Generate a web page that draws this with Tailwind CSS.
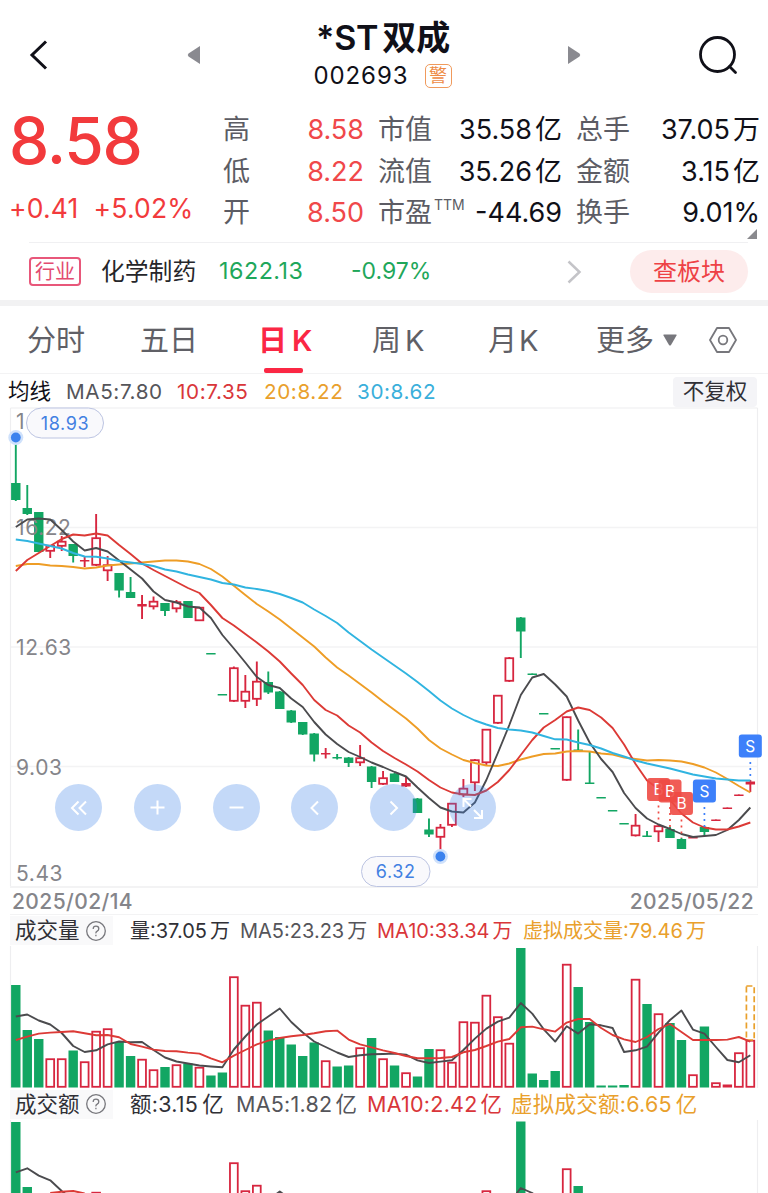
<!DOCTYPE html>
<html lang="zh-CN">
<head>
    <meta charset="UTF-8">
    <meta name="viewport" content="width=device-width, initial-scale=1.0">
    <title>*ST双成 002693</title>
    <script src="https://cdn.jsdelivr.net/npm/@tailwindcss/browser@4"></script>
</head>
<body class="bg-white">
<div class="w-[768px] h-[1193px] overflow-hidden bg-white text-[#101018] font-['Inter','Noto_Sans_CJK_SC',sans-serif] whitespace-nowrap">

    <!-- Header -->
    <header class="h-[108px] flex items-start justify-between pl-[28px] pr-[29px]">
        <svg class="w-5 h-[30px] mt-10" viewBox="0 0 20 30" fill="none" stroke="#101018" stroke-width="3"><path d="M18 1.5L4 15L18 28.5"/></svg>
        <svg class="w-[14px] h-5 mt-[45px] ml-[31px]" viewBox="0 0 14 20" fill="#8a8a90"><path d="M13 1v18L1.5 11.5Q0 10 1.5 8.5Z"/></svg>
        <div class="flex flex-col items-center pt-[17px] w-[150px]">
            <h1 class="text-[34px] leading-[42px] font-semibold tracking-[-0.2px] -ml-[2px]">*ST<span class="ml-1">双成</span></h1>
            <div class="flex items-center justify-between w-[138px] h-[34px] -ml-[3px]">
                <span class="text-[24px] tracking-[0.9px]">002693</span>
                <span class="flex items-center justify-center w-[27px] h-6 rounded-[5px] border-[1.5px] border-[#f09a5c] text-[#ee8b45] text-[18px] leading-none">警</span>
            </div>
        </div>
        <svg class="w-[14px] h-5 mt-[45px] mr-[10px]" viewBox="0 0 14 20" fill="#8a8a90"><path d="M1 1v18L12.5 11.5Q14 10 12.5 8.5Z"/></svg>
        <svg class="w-10 h-10 mt-9" viewBox="0 0 40 40" fill="none" stroke="#101018" stroke-width="2.8" stroke-linecap="round"><circle cx="18.5" cy="18.5" r="17"/><path d="M30.5 30.5L36.5 36.5"/></svg>
    </header>

    <!-- Quote -->
    <section class="h-[134px] flex relative">
        <div class="w-[223px] pl-[9px] text-[#f23a3c]">
            <div class="text-[64px] leading-[64px] pt-px font-medium tracking-[-1.2px]">8.58</div>
            <div class="flex gap-[15px] mt-5 text-[26.5px] leading-[30px] tracking-[0.2px]"><span>+0.41</span><span>+5.02%</span></div>
        </div>
        <dl class="grid grid-cols-[60px_81px_88px_110px_88px_110px] [&_dt]:text-[#5c5c64] [&_dd]:text-right text-[27px] leading-[41.5px] pt-px h-[126px] w-[537px]">
            <dt>高</dt><dd class="text-[#f0484a]">8.58</dd><dt class="pl-[14px]">市值</dt><dd>35.58<span class="ml-[3px]">亿</span></dd><dt class="pl-[14px]">总手</dt><dd>37.05<span class="ml-[3px]">万</span></dd>
            <dt>低</dt><dd class="text-[#f0484a]">8.22</dd><dt class="pl-[14px]">流值</dt><dd>35.26<span class="ml-[3px]">亿</span></dd><dt class="pl-[14px]">金额</dt><dd>3.15<span class="ml-[3px]">亿</span></dd>
            <dt>开</dt><dd class="text-[#f0484a]">8.50</dd><dt class="pl-[14px] flex items-start">市盈<span class="text-[14px] leading-[25px] ml-[2px]">TTM</span></dt><dd>-44.69</dd><dt class="pl-[14px]">换手</dt><dd>9.01%</dd>
        </dl>
        <svg class="absolute right-[11px] bottom-[3px] w-[10px] h-[10px]" viewBox="0 0 10 10" fill="#8a8a8e"><path d="M10 0v10H0Z"/></svg>
    </section>

    <!-- Industry -->
    <section class="h-[58px] border-t border-[#f0f0f2] ml-[29px] mr-5 flex items-center">
        <span class="w-[52px] h-[29px] border-2 border-[#e8577a] text-[#e34b70] rounded-[4px] flex items-center justify-center text-[20px]">行业</span>
        <span class="ml-5 w-[118px] text-[23.8px] text-[#26262a]">化学制药</span>
        <span class="w-[132px] text-[23.3px] tracking-[0.5px] text-[#1fa75b]">1622.13</span>
        <span class="w-[216px] text-[23px] text-[#1fa75b]">-0.97%</span>
        <svg class="w-[15px] h-6" viewBox="0 0 15 24" fill="none" stroke="#c4c4c8" stroke-width="2.5"><path d="M1.5 1.5L12.5 12L1.5 22.5"/></svg>
        <button class="ml-[48px] w-[118px] h-[43px] rounded-full bg-[#fdecec] text-[#ee4245] text-[24px]">查板块</button>
    </section>
    <div class="h-[6px] bg-[#f2f2f3]"></div>

    <!-- Period tabs -->
    <nav class="h-[68px] border-b border-[#f3f3f4] flex items-center text-[29px] text-[#606066] [&>span]:pt-[3px]">
        <span class="w-[113px] ml-[27px]">分时</span>
        <span class="w-[118px]">五日</span>
        <span class="w-[114px] h-full flex items-center relative font-semibold text-[#fb2744]">日<span class="ml-[5px]">K</span><i class="absolute left-[6px] bottom-0 w-[39px] h-[5px] rounded-[2px] bg-[#fb2744]"></i></span>
        <span class="w-[116px]">周<span class="ml-[4px]">K</span></span>
        <span class="w-[108px]">月<span class="ml-[2px]">K</span></span>
        <span>更多</span>
        <svg class="w-[14px] h-3 ml-[9px]" viewBox="0 0 14 12" fill="#77777c"><path d="M1 .5h12q1 0 .5 1L8 11q-1 1-2 0L.5 1.5Q0 .5 1 .5Z"/></svg>
        <svg class="w-7 h-[26px] ml-[32px]" viewBox="0 0 28 26" fill="none" stroke="#77777c" stroke-width="1.8" stroke-linejoin="round"><path d="M8 1h12L27 13L20 25H8L1 13Z"/><circle cx="14" cy="13" r="4.3"/></svg>
    </nav>

    <!-- Moving averages -->
    <div class="h-[34px] pl-[8px] pr-[11px] pt-px flex items-center text-[20.7px] tracking-[0.6px]">
        <span class="w-[58px] text-[21.5px] tracking-normal">均线</span>
        <span class="w-[111px] text-[#55555a]">MA5:7.80</span>
        <span class="w-[87px] text-[#d9363a]">10:7.35</span>
        <span class="w-[93px] text-[#e9a02c]">20:8.22</span>
        <span class="flex-1 text-[#3aafdb]">30:8.62</span>
        <span class="w-[84px] h-[30px] rounded-[4px] bg-[#f4f4f7] flex items-center justify-center text-[21.5px] tracking-normal text-[#303036]">不复权</span>
    </div>

    <!-- K line chart -->
    <div class="relative h-[478px]">
        <svg id="kline" class="block w-[768px] h-[478px] overflow-visible" viewBox="0 408 768 478"></svg>
        <div class="absolute left-[55px] top-[376px] flex gap-[31.8px] [&>span]:w-[47px] [&>span]:h-[47px] [&>span]:rounded-full [&>span]:bg-[#3b82e8]/30 [&_svg]:w-[47px] [&_svg]:h-[47px] [&_svg]:fill-none [&_svg]:stroke-white [&_svg]:stroke-[2px]">
            <span><svg viewBox="0 0 47 47"><path d="M23.5 17.5l-6.500 6.500l6.500 6.500M31 17.5l-6.500 6.500l6.500 6.500"/></svg></span>
            <span><svg viewBox="0 0 47 47"><path d="M16.5 23.5h14M23.5 16.5v14"/></svg></span>
            <span><svg viewBox="0 0 47 47"><path d="M16.5 23.5h14"/></svg></span>
            <span><svg viewBox="0 0 47 47"><path d="M27 17.5l-6.500 6.500l6.500 6.500"/></svg></span>
            <span><svg viewBox="0 0 47 47"><path d="M20.5 17.5l6.500 6.500l-6.500 6.500"/></svg></span>
            <span><svg viewBox="0 0 47 47"><path d="M22 22.5l-7.500-7.500M14.5 23v-8h8M25 26l7.500 7.500M25 34h8v-8"/></svg></span>
        </div>
    </div>

    <!-- Dates -->
    <div class="h-[29px] mx-[10px] pt-[2px] border-t-2 border-b border-[#f3f3f4] flex items-center justify-between pl-[2px] pr-[4px] text-[21px] text-[#85858a] font-medium tracking-[0.4px]">
        <span>2025/02/14</span><span>2025/05/22</span>
    </div>

    <!-- Volume -->
    <div class="h-[31px] pl-[10px] flex items-center text-[20px]">
        <div class="w-[103px] h-[29px] pl-[5px] mr-[17px] bg-[#f9f9fa] flex items-center gap-[6px] text-[21.5px] text-[#303036]">成交量
            <svg class="w-5 h-5" viewBox="0 0 20 20" fill="none" stroke="#77777c" stroke-width="1.3"><circle cx="10" cy="10" r="9.3"/><path d="M7.2 8q0-2.800 2.800-2.800t2.800 2.600q0 1.500-1.600 2.300T9.900 12.300M9.900 13.800v1.400"/></svg>
        </div>
        <span class="w-[110px] text-[#303036]">量:37.05<span class="ml-[3px]">万</span></span>
        <span class="w-[137px] text-[#55555a]">MA5:23.23<span class="ml-[3px]">万</span></span>
        <span class="w-[146px] text-[#d9363a]">MA10:33.34<span class="ml-[3px]">万</span></span>
        <span class="text-[#e9a02c]">虚拟成交量:79.46<span class="ml-[3px]">万</span></span>
    </div>
    <svg id="volume" class="block w-[768px] h-[142px]" viewBox="0 946 768 142"></svg>

    <!-- Turnover -->
    <div class="h-[32px] pl-[10px] flex items-center text-[21.5px] tracking-[0.25px]">
        <div class="w-[103px] h-[29px] pl-[5px] mr-[17px] bg-[#f9f9fa] flex items-center gap-[6px] text-[21.5px] tracking-normal text-[#303036]">成交额
            <svg class="w-5 h-5" viewBox="0 0 20 20" fill="none" stroke="#77777c" stroke-width="1.3"><circle cx="10" cy="10" r="9.3"/><path d="M7.2 8q0-2.800 2.800-2.800t2.800 2.600q0 1.500-1.600 2.300T9.900 12.300M9.900 13.800v1.400"/></svg>
        </div>
        <span class="w-[106px] text-[#303036]">额:3.15<span class="ml-1">亿</span></span>
        <span class="w-[131px] text-[#55555a]">MA5:1.82<span class="ml-[3px]">亿</span></span>
        <span class="w-[144px] text-[#d9363a]">MA10:2.42<span class="ml-[3px]">亿</span></span>
        <span class="text-[#e9a02c]">虚拟成交额:6.65<span class="ml-1">亿</span></span>
    </div>
    <svg id="turnover" class="block w-[768px] h-[73px]" viewBox="0 1120 768 73"></svg>
</div>

<script>
    const RED = '#d7263f', GREEN = '#12a663';
    const xAt = i => 15.8 + i * 11.477;

    // color, high, body top, body bottom, low
    const candles = [
        ['g',437,483,500,501],['g',485,508,514,515],['g',512,512,552,552],['r',545,545,551.5,558],['r',536,541,546.5,551],
        ['g',544,544,556,562.5],['r',556,560,561.5,567],['r',514,537.5,565.5,566],['r',556,564.5,571,581],['g',573,573,590.5,597.5],
        ['g',577,592,598,598],['r',595,604,606.5,619],['r',596.5,601,607,609.5],['g',603,603,611,616],['r',600,601.5,609,612.5],
        ['g',601,601,618,618],['r',607,607,621,621],['g',653,653,654.5,654],['g',694,694,695.5,695],['r',666.5,667.5,701.5,702],
        ['r',675,691,701.5,708],['r',661.5,681,699.5,706],['g',671.5,682,692.5,694],['g',691,691.5,709,709],['g',710,710.5,722.5,723],
        ['g',722,722,734.5,735],['g',733,733.5,754.5,761.5],['r',748,753,754.5,758.5],['g',754,757,758.5,759.5],['g',757,757.5,763,767],
        ['r',745,757.5,763,766],['g',766,766.5,782,788],['r',771,777.5,784.5,785],['g',773,773.5,782,782],['r',777,783,786.5,787],
        ['g',798,798.5,813,813],['g',818.5,829.5,834.5,837],['r',824,827,837.5,852],['r',803,803,825.5,827],['r',779,788,795,797],
        ['r',759,759.5,783,791],['r',729,729,763,765],['r',695,695,723.5,724],['r',657,657.5,681.5,682],['g',617,617.5,631.5,658],
        ['g',673.5,673.5,675,675],['g',713,713,714.5,714],['g',748,748,749.5,749],['r',716.5,716.5,780.5,781],['g',729.5,749.5,751,751],
        ['g',752,782.5,784,784],['g',797,797,798.5,798],['g',810,810,811.5,811],['g',823,823,824.5,824],['r',814,825,836,836.5],
        ['g',831,835.5,837,837],['r',824,825.5,832,842],['g',827,829,838,838],['g',838,839,849,849],['r',837,837,838.5,838],
        ['g',826,827,832,836],['r',819.5,819.5,821,821],['r',807.5,807.5,809,809],['r',794.5,794.5,796,796],['r',780,781.5,784.5,792]
    ];

    const ma5 = [527,519.5,518.5,519.5,530,541.5,550.5,548,551.5,560.5,569.5,578.5,591.5,600,602.5,606.5,607.5,618,635,648.5,662.5,677,685,688,698.5,707,722,734.5,744,752,757,762.5,767,772,776.5,787.5,798,807.5,811.5,812.5,802.5,780,753,725,695,677.5,674,684.5,696.5,720.5,742.5,759,772,793,808,818.5,824.5,829,834,837,836,835,830,820,807.5];
    const ma10 = [571,560,553,546,539,534.5,535.5,533.5,535.5,545,554,563.5,570,576,582,588,593,605,618,625.5,634,642.5,651.5,661.5,673.5,685,700,710,715.5,725.5,732.5,742.5,751,758,764.5,771.5,780,787.5,792.5,794.5,795,790.5,782,770,755,740,727.5,720,711.5,707.5,710,717.5,728,744.5,764,780.5,789,800,813.5,822.5,827.5,829.5,829.5,826.5,822.5];
    const ma20 = [566,564,564,565.5,566,567,568.5,567.5,565.5,564.5,563.5,562.5,561.5,560.5,560.5,561.5,564,569,576.5,585.7,595,604,611.5,619.5,628.5,637.5,646.5,657.5,667.5,675.5,684,692.5,701.5,710,718.5,728.5,740,748.5,754.5,760,763,765.5,766,763.5,759.5,756.5,754,753.5,751.5,751,751.5,753.5,754.5,757.5,759,760.5,760,760.5,761.5,764,767.5,772.5,779,786,792.5];
    const ma30 = [539.5,541,543.5,546,548.5,553,556.5,556.7,558.5,561,562.5,564,566,569.5,571.5,574.5,577,579.5,583,584.5,587.5,589,591,594,598,602.5,609.5,616,623,632.5,641,649.5,657.5,665.5,673.5,682,691,700.5,708.5,715,720.5,724.5,728,729.5,730.5,732.5,736,739.3,739.5,742.5,745,748.5,753,756.5,760.5,763.5,766,768.5,771.5,774.5,776.5,778.5,779.5,780.5,780.5];

    // bar tops, colors follow `volColor`
    const volTop = [985,1030,1039,1058.5,1058.5,1050.5,1061.5,1031,1028.5,1042,1056,1059,1069.5,1067,1064.5,1063.5,1067,1075.5,1072.5,976.5,1005,1002,1030.5,1037,1044.5,1056,1042.5,1060.5,1066.5,1065.5,1047.5,1038,1058.5,1065.5,1072.5,1076.5,1049,1049.5,1062,1021.5,1022,995,1016.5,1043,948,1073.5,1080,1071,964,987,1022,1085.5,1085.5,1085,979,1004,1013.5,1023,1040,1074.5,1026.5,1082.5,1084.5,1052.5,1040];
    const volColor = 'gggrrgrrrggrrgrgrggrrrgggggrggrgrgrggrrrrrrrggggrgggggrgrggrgrrrr';
    const volMa5 = [1016.5,1014.5,1020.5,1024.5,1033,1046,1052,1050.3,1044.3,1041.5,1042.3,1042,1050,1057.5,1061.5,1063.5,1065.5,1066.5,1067.3,1049.5,1036.5,1024.5,1016.5,1008.5,1022,1032.5,1041.5,1047,1052.5,1057,1055.3,1054.3,1054,1053.6,1054.6,1060.3,1063,1061.6,1060.3,1050,1038.6,1028.6,1021.6,1017.6,1003,1013.6,1029.3,1041.6,1026.3,1033.6,1024.3,1025.3,1028,1052,1050.3,1046.6,1032.6,1020,1010.6,1029.6,1033.6,1047,1060,1062.3,1055.3];
    const volMa10 = [1040,1036.6,1033.6,1032.6,1032,1031.3,1033.3,1035.3,1035,1037.3,1044,1046.6,1049.6,1051,1051.3,1052.6,1053.6,1058.3,1062.3,1055.6,1050,1044.3,1040.6,1038,1036.3,1035,1033.3,1031.3,1030.6,1039.6,1044.3,1047.3,1050.3,1053,1056,1058.3,1058.3,1058,1057,1052.3,1050,1046,1041.6,1039,1027.3,1026.6,1029.3,1031.6,1022.6,1019,1019,1028,1035,1039.3,1042,1037,1029,1024,1032,1040,1040,1040,1039.6,1037,1041.6];

    const hline = (y, c = '#f3f3f4', w = 1.5) => `<path d="M10.5 ${y}H757.5" stroke="${c}" stroke-width="${w}"/>`;
    const frame = (t, b) => `<path d="M10.5 ${t}V${b}M757.5 ${t}V${b}" stroke="#eeeef0" stroke-width="1.2"/>`;
    const line = (a, c, from = 0) => `<polyline fill="none" stroke="${c}" stroke-width="1.9" stroke-linejoin="round" points="${a.map((y, i) => xAt(i + from) + ',' + y).join(' ')}"/>`;

    function box(i, color, top, bottom) {
        const x = xAt(i), h = bottom - top;
        if (color === 'g') return `<rect x="${x - 4.7}" y="${top}" width="9.4" height="${h}" fill="${GREEN}"/>`;
        if (h < 4.5) return `<rect x="${x - 4.7}" y="${top}" width="9.4" height="${h}" fill="${RED}"/>`;
        return `<rect x="${x - 3.9}" y="${top + .7}" width="7.8" height="${h - 1.4}" fill="#fff" stroke="${RED}" stroke-width="1.8"/>`;
    }

    function candle([c, hi, top, bottom, lo], i) {
        return `<path d="M${xAt(i)} ${hi}V${lo}" stroke="${c === 'g' ? GREEN : RED}" stroke-width="1.9"/>` + box(i, c, top, bottom);
    }

    function pill(x, y, w, h, text) {
        return `<rect x="${x}" y="${y}" width="${w}" height="${h}" rx="${h / 2}" fill="#f9f9fc" stroke="#bcc4e2"/>
            <text x="${x + w / 2}" y="${y + h / 2 + 6.7}" text-anchor="middle" font-size="18" letter-spacing=".6" fill="#4280e2">${text}</text>`;
    }

    function dot(x, y) {
        return `<circle cx="${x}" cy="${y}" r="7.5" fill="#cfe1fb"/><circle cx="${x}" cy="${y}" r="4.9" fill="#3b82ee"/>`;
    }

    function mark(i, y, letter, end) {
        const x = xAt(i), c = letter === 'S' ? '#3d80fa' : '#ee4a44';
        return `<path d="M${x} ${y + 16}V${end}" stroke="${c}" stroke-width="1.7" stroke-dasharray="2 4"/>
            <rect x="${x - 11.5}" y="${y - 11.5}" width="23" height="23" rx="3" fill="${c}" fill-opacity="${letter === 'S' ? 1 : .9}"/>
            <text x="${x}" y="${y + 5.5}" text-anchor="middle" font-size="15.5" fill="#fff">${letter}</text>`;
    }

    document.getElementById('kline').innerHTML =
        hline(408) + hline(527.5) + hline(647) + hline(766.5) + frame(408, 886) +
        candles.map(candle).join('') +
        [['1', 429], ['16.22', 535], ['12.63', 655], ['9.03', 774.5], ['5.43', 881]].map(([t, y]) => `<text x="16" y="${y}" font-size="21" letter-spacing=".6" fill="#85858a">${t}</text>`).join('') +
        line(ma20, '#ee9d26') + line(ma5, '#4b4b4e') + line(ma10, '#dc3a36') + line(ma30, '#30b4e0') +
        pill(26.5, 408, 77, 30, '18.93') + dot(15.8, 437.5) +
        pill(361.5, 856.5, 68.5, 30, '6.32') + dot(440.4, 856.5) +
        mark(56, 789.5, 'B', 822) + mark(57, 791, 'B', 828) + mark(58, 803.5, 'B', 838) +
        mark(60, 791, 'S', 827) + mark(64, 746, 'S', 779);

    document.getElementById('volume').innerHTML =
        frame(946, 1088) +
        volTop.map((y, i) => box(i, volColor[i], y, 1087.5)).join('') +
        `<rect x="746.4" y="986" width="7.8" height="54" fill="none" stroke="#e9a02c" stroke-width="1.7" stroke-dasharray="6 3"/>` +
        line(volMa5, '#4b4b4e') + line(volMa10, '#dc3a36');

    document.getElementById('turnover').innerHTML =
        frame(1120, 1193) +
        [[0, 'g', 1122], [1, 'g', 1187], [7, 'r', 1192], [19, 'r', 1162.5], [20, 'r', 1190.5], [21, 'r', 1185], [41, 'r', 1190.5], [44, 'g', 1121.5], [48, 'r', 1168.5], [49, 'g', 1186]]
            .map(([i, c, y]) => box(i, c, y, 1260)).join('') +
        line([1172.3, 1168.3, 1175.6, 1180.3, 1191, 1200], '#4b4b4e') +
        line([1200, 1191.5, 1200], '#4b4b4e', 22) +
        line([1203, 1188, 1193, 1205], '#4b4b4e', 43) +
        line([1193, 1191.8, 1191, 1193.5], '#dc3a36', 3);
</script>
</body>
</html>
